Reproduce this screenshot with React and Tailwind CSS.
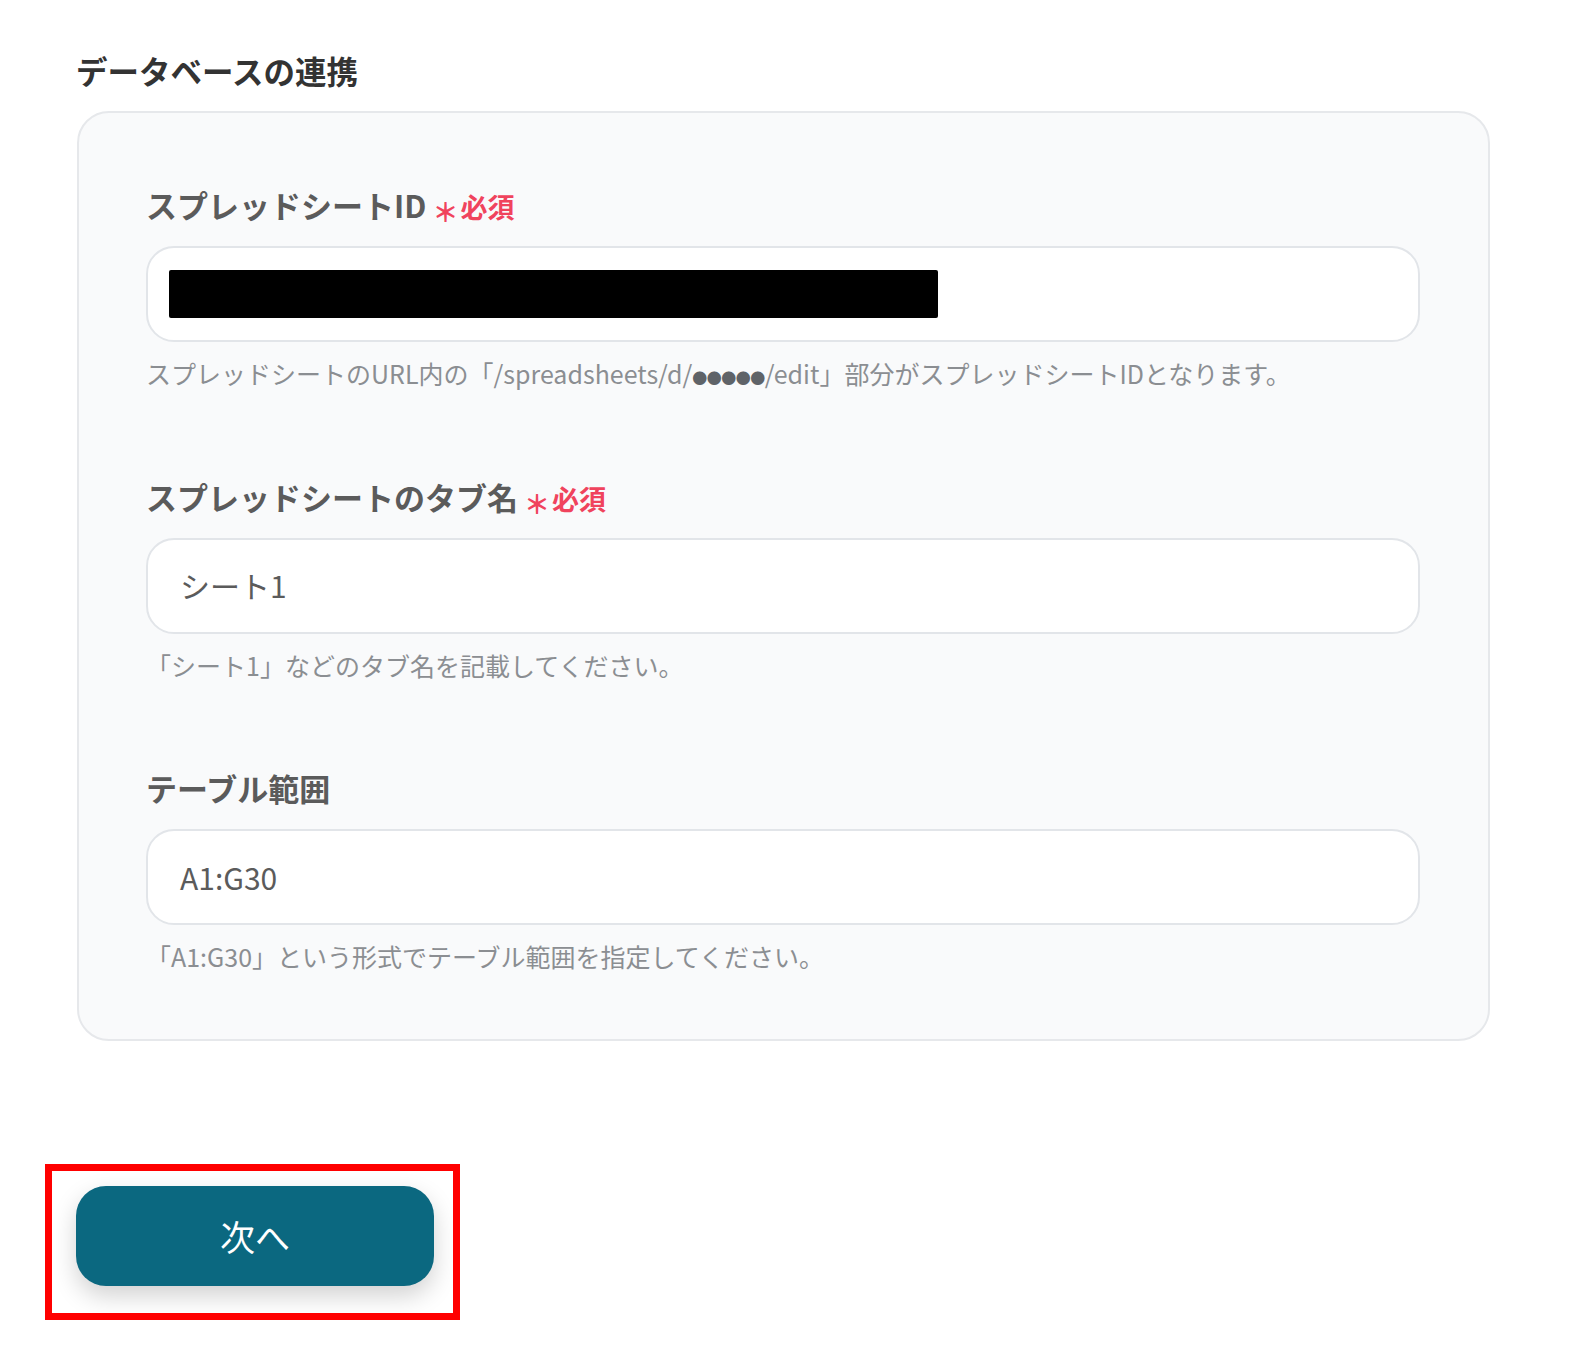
import React from 'react';

const FONT = { fontFamily: '"Noto Sans CJK JP", "Noto Sans", sans-serif' };

const Label = ({ text, required }) => (
  <div className="flex items-baseline h-[40px] leading-[40px]">
    <span className="text-[31px] font-bold text-[#5b5b5b]">{text}</span>
    {required && (
      <span className="ml-[6px] flex items-baseline text-[#f0435d] font-bold">
        <span className="text-[26px] translate-y-[4px]">＊</span>
        <span className="text-[27px] ml-[2px]">必須</span>
      </span>
    )}
  </div>
);

const Field = ({ label, required, children, help }) => (
  <div>
    <Label text={label} required={required} />
    <div className="mt-[21px] h-[96px] w-full rounded-[28px] border-2 border-[#e2e5e9] bg-white flex items-center px-[21px]">
      {children}
    </div>
    <p className="mt-[15px] h-[32px] leading-[32px] text-[25px] text-[#8b8e92] whitespace-nowrap">
      {help}
    </p>
  </div>
);

export default function App() {
  return (
    <div className="min-h-screen bg-white pl-[76px] pt-[50px] pb-[30px]" style={FONT}>
      {/* Section title */}
      <h2 className="text-[31.5px] leading-[40px] font-bold text-[#333]">データベースの連携</h2>

      {/* Card */}
      <div className="mt-[21px] ml-[1px] w-[1413px] rounded-[32px] border-2 border-[#e6e8eb] bg-[#f9fafb] pl-[67px] pr-[68px] pt-[72px] pb-[67px] flex flex-col gap-[87.5px]">
        <Field
          label="スプレッドシートID"
          required
          help={
            <>
              スプレッドシートのURL内の「/spreadsheets/d/
              <span className="text-[15px] text-[#5f6368] tracking-[-0.5px]">●●●●●</span>
              /edit」部分がスプレッドシートIDとなります。
            </>
          }
        >
          <div className="h-[48px] w-[769px] bg-black rounded-[2px]" />
        </Field>

        <Field
          label="スプレッドシートのタブ名"
          required
          help="「シート1」などのタブ名を記載してください。"
        >
          <span className="pl-[11px] text-[30px] text-[#5b5b5b]">シート1</span>
        </Field>

        <Field
          label="テーブル範囲"
          help="「A1:G30」という形式でテーブル範囲を指定してください。"
        >
          <span className="pl-[11px] text-[30px] text-[#5b5b5b]">A1:G30</span>
        </Field>
      </div>

      {/* Next button with highlight frame */}
      <div className="relative mt-[145px] w-[358px]">
        <button className="h-[100px] w-[358px] rounded-[30px] bg-[#0b6880] text-white text-[35px] shadow-[0_10px_24px_rgba(0,0,0,0.18)]">
          次へ
        </button>
        <div className="absolute left-[-31px] top-[-22px] w-[415px] h-[156px] border-[7px] border-[#ff0000] pointer-events-none" />
      </div>
    </div>
  );
}
